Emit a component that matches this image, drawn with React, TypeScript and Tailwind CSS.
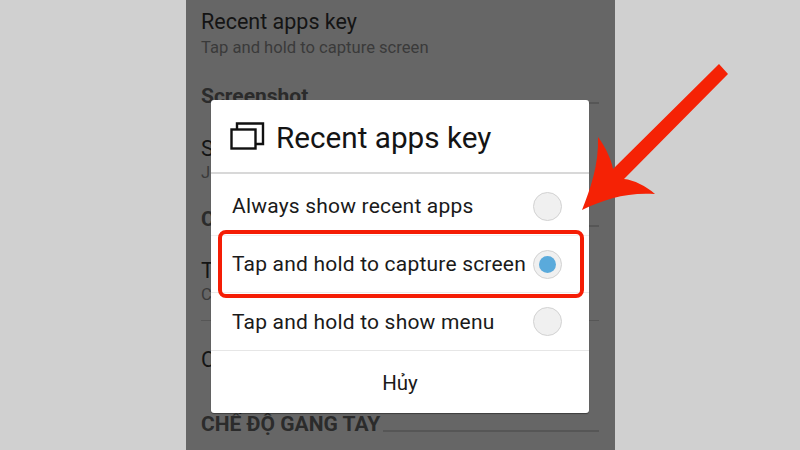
import React from "react";

const font = "font-['Roboto',sans-serif]";

const Section = ({ title, className }: { title: string; className: string }) => (
	<div className={`flex items-end gap-[3px] ${className}`}>
		<span className="text-[21px] leading-[24px] font-bold text-[#2b2b2b] whitespace-nowrap">{title}</span>
		<div className="flex-1 h-[2px] mb-[4px] bg-[#565656]" />
	</div>
);

const Radio = ({ checked }: { checked?: boolean }) => (
	<div className="w-[29px] h-[29px] rounded-full bg-[#f0f0f0] border border-[#d2d2d2] flex items-center justify-center shrink-0">
		{checked && <div className="w-[17px] h-[17px] rounded-full bg-[#5aaadb]" />}
	</div>
);

const Option = ({ label, checked, className }: { label: string; checked?: boolean; className: string }) => (
	<div className={`flex items-center justify-between pl-[21px] pr-[27px] ${className}`}>
		<span className="text-[21px] tracking-[0.2px] pt-[2px] text-[#1a1a1a] whitespace-nowrap">{label}</span>
		<Radio checked={checked} />
	</div>
);

export default function App() {
	return (
		<div className={`relative w-[800px] h-[450px] overflow-hidden bg-[#d0d0d0] ${font}`}>
			{/* settings list behind the dialog */}
			<div className="ml-[186px] w-[429px] h-[450px] bg-[#666666] pl-[15px] pr-[16px] overflow-hidden">
				<div className="pt-[9px] text-[21.5px] leading-[26px] text-[#141414]">Recent apps key</div>
				<div className="pt-[2px] text-[16.6px] leading-[22px] text-[#3a3a3a]">Tap and hold to capture screen</div>
				<Section title="Screenshot" className="mt-[25px]" />
				<div className="mt-[28px] text-[21.5px] leading-[26px] text-[#141414]">S</div>
				<div className="text-[16.6px] leading-[22px] text-[#3a3a3a]">J</div>
				<Section title="C" className="mt-[23px]" />
				<div className="mt-[27px] text-[21.5px] leading-[26px] text-[#141414]">T</div>
				<div className="text-[16.6px] leading-[22px] text-[#3a3a3a]">C</div>
				<div className="mt-[14px] h-px bg-[#565656]" />
				<div className="mt-[26px] text-[21.5px] leading-[26px] text-[#141414]">C</div>
				<Section title="CHẾ ĐỘ GANG TAY" className="mt-[39px]" />
			</div>

			{/* dialog */}
			<div className="absolute left-[211px] top-[100px] w-[378px] h-[313px] bg-white rounded-[3px] shadow-[0_1px_1px_rgba(0,0,0,0.4)] flex flex-col">
				<div className="h-[74px] flex items-center pl-[18px] gap-[11px] border-b-[2px] border-[#d8d8d8] shrink-0">
					<svg width="36" height="32" viewBox="0 0 36 32" fill="none" stroke="#111" strokeWidth="2.4">
						<rect x="2.5" y="9.5" width="24" height="19" />
						<path d="M8 9.5V3.5H34V24H26.5" />
					</svg>
					<span className="text-[29.7px] pt-[4px] leading-none text-[#141414] whitespace-nowrap">Recent apps key</span>
				</div>
				<Option label="Always show recent apps" className="h-[62px] pt-[3px] border-b border-[#f0f0f0]" />
				<Option label="Tap and hold to capture screen" checked className="h-[57px] border-b border-[#ececec]" />
				<Option label="Tap and hold to show menu" className="h-[58px] border-b border-[#e6e6e6]" />
				<div className="flex-1 flex items-center justify-center text-[20.5px] pt-[2px] text-[#1a1a1a]">Hủy</div>
			</div>

			{/* red highlight */}
			<div className="absolute left-[218px] top-[230px] w-[366px] h-[68px] border-[4px] border-[#f51d05] rounded-[8px]" />

			{/* arrow */}
			<svg className="absolute left-[570px] top-[60px]" width="170" height="160" viewBox="570 60 170 160">
				<path
					fill="#f52205"
					d="M719 64 L728 74 L624 179 C634 180 646 186 655 194 C628 192 604 199 582 210 C590 190 599 165 598 137 C606 148 611 159 613 169 Z"
				/>
			</svg>
		</div>
	);
}
